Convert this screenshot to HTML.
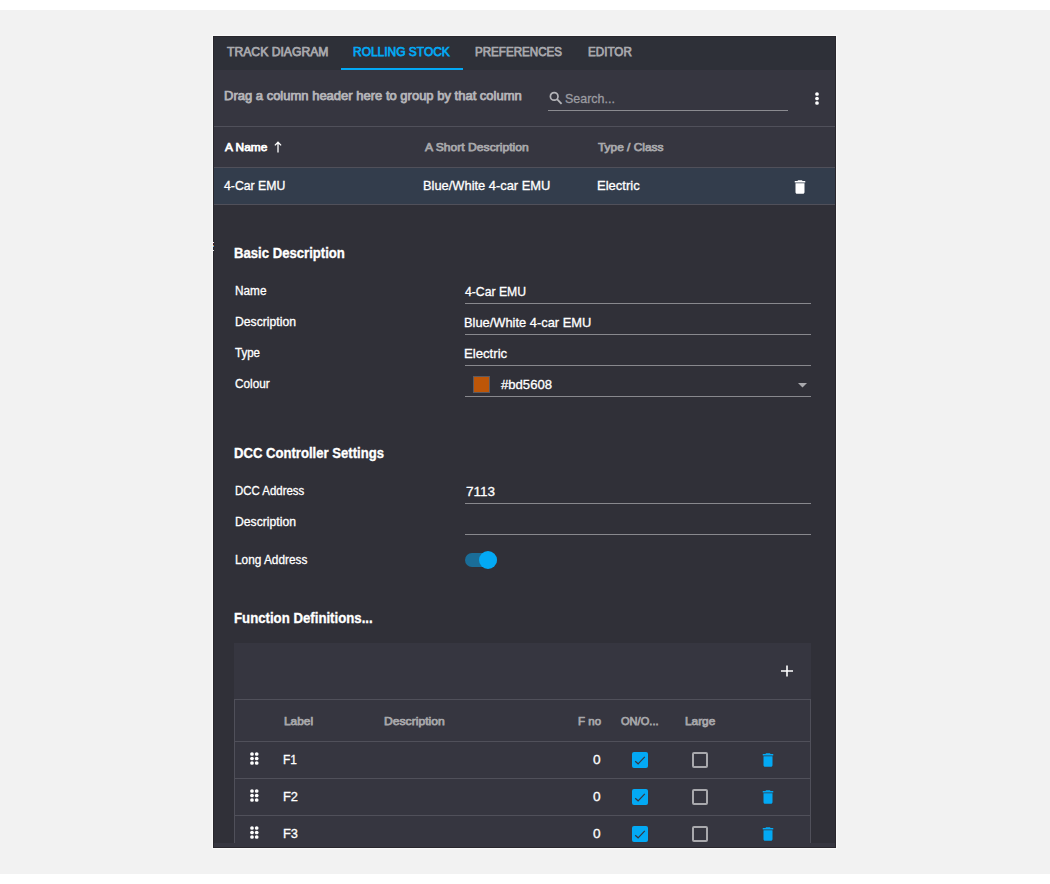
<!DOCTYPE html>
<html lang="en">
<head>
<meta charset="utf-8">
<title>Rolling Stock</title>
<style>
*{box-sizing:border-box;margin:0;padding:0}
html,body{width:1050px;height:884px;overflow:hidden}
body{position:relative;background:#f2f2f2;font-family:"Liberation Sans",sans-serif;color:#fff}
.a{position:absolute}
.strip{left:0;width:1050px;height:10px;background:#fff}
#panel{left:213px;top:36px;width:623px;height:812px;background:#303038;overflow:hidden;box-shadow:0 0 0 1px #f9f9f9,0 0 0 2px rgba(255,255,255,.12)}
/* all coordinates inside #page are page coordinates */
#page{position:absolute;left:0;top:0;width:1050px;height:884px;overflow:hidden}
.t{position:absolute;height:20px;line-height:20px;white-space:nowrap;transform-origin:0 0}
.ln{position:absolute;height:1px;background:#50505a}
.ul{position:absolute;height:1px;background:#88888d;left:465px;width:346px}
svg{position:absolute;overflow:visible}
</style>
</head>
<body>
<div class="a strip" style="top:0"></div>
<div class="a strip" style="top:874px"></div>
<div class="a" id="panel"></div>
<div id="page">
  <!-- tab bar -->
  <div class="a" style="left:213px;top:36px;width:623px;height:34px;background:#2e3038"></div>
  <div class="a" style="left:341px;top:68px;width:122px;height:2px;background:#03a9f4"></div>
  <!-- master grid -->
  <div class="a" style="left:213px;top:70px;width:623px;height:135px;background:#363640"></div>
  <div class="ln" style="left:213px;top:126px;width:623px"></div>
  <div class="ln" style="left:213px;top:167px;width:623px"></div>
  <div class="a" style="left:213px;top:168px;width:623px;height:36px;background:#333d4c"></div>
  <div class="ln" style="left:213px;top:204px;width:623px"></div>
  <!-- search -->
  <div class="a" style="left:548px;top:110px;width:240px;height:1px;background:#8b8b90"></div>
  <svg style="left:548px;top:90px" width="16" height="16" viewBox="0 0 16 16"><circle cx="6.2" cy="6.4" r="3.8" fill="none" stroke="#b4b4b8" stroke-width="1.7"/><path d="M9 9.2 L13.6 13.8" stroke="#b4b4b8" stroke-width="1.9" fill="none"/></svg>
  <!-- kebab -->
  <svg style="left:813px;top:90px" width="8" height="16" viewBox="0 0 8 16"><circle cx="4" cy="4" r="1.85" fill="#fff"/><circle cx="4" cy="8.5" r="1.85" fill="#fff"/><circle cx="4" cy="13" r="1.85" fill="#fff"/></svg>
  <!-- sort arrow -->
  <svg style="left:272.8px;top:140.6px" width="10" height="12" viewBox="0 0 10 12"><path d="M5 1.2 V11.4 M1.9 4.4 L5 1.2 L8.1 4.4" stroke="#fff" stroke-width="1.3" fill="none"/></svg>
  <!-- trash white -->
  <svg style="left:790.7px;top:177.8px" width="18" height="18" viewBox="0 0 24 24"><path fill="#fff" d="M6 19c0 1.1.9 2 2 2h8c1.1 0 2-.9 2-2V7H6v12zM19 4h-3.5l-1-1h-5l-1 1H5v2h14V4z"/></svg>

  <!-- form underlines -->
  <div class="ul" style="top:303px"></div>
  <div class="ul" style="top:334px"></div>
  <div class="ul" style="top:365px"></div>
  <div class="ul" style="top:396px"></div>
  <div class="ul" style="top:503px"></div>
  <div class="ul" style="top:534px"></div>
  <!-- colour swatch -->
  <div class="a" style="left:473px;top:376px;width:17px;height:17px;background:#bd5608;border:1px solid #5a5a62"></div>
  <svg style="left:797.5px;top:383px" width="9" height="5" viewBox="0 0 9 5"><path d="M0 0 H9 L4.5 4.4 Z" fill="#a9a9ad"/></svg>
  <!-- switch -->
  <div class="a" style="left:465px;top:553px;width:32px;height:14px;border-radius:7px;background:#1a6d98"></div>
  <div class="a" style="left:479px;top:551px;width:18px;height:18px;border-radius:9px;background:#03a9f4"></div>

  <!-- inner grid -->
  <div class="a" style="left:234px;top:643px;width:577px;height:200px;background:#363640"></div>
  <div class="ln" style="left:234px;top:699px;width:577px"></div>
  <div class="ln" style="left:234px;top:741px;width:577px"></div>
  <div class="ln" style="left:234px;top:778px;width:577px"></div>
  <div class="ln" style="left:234px;top:815px;width:577px"></div>
  <div class="a" style="left:234px;top:699px;width:1px;height:144px;background:#50505a"></div>
  <div class="a" style="left:810px;top:699px;width:1px;height:144px;background:#50505a"></div>
  <!-- plus -->
  <svg style="left:781.1px;top:665.2px" width="12" height="12" viewBox="0 0 12 12"><path d="M0 6 H12 M6 .4 V11.6" stroke="#fff" stroke-width="1.6" fill="none"/></svg>
  <svg style="left:249.8px;top:752px" width="9" height="13" viewBox="0 0 9 13"><circle cx="2" cy="2" r="1.85" fill="#fff"/><circle cx="2" cy="6.5" r="1.85" fill="#fff"/><circle cx="2" cy="11" r="1.85" fill="#fff"/><circle cx="6.7" cy="2" r="1.85" fill="#fff"/><circle cx="6.7" cy="6.5" r="1.85" fill="#fff"/><circle cx="6.7" cy="11" r="1.85" fill="#fff"/></svg>
  <div class="a" style="left:632px;top:752px;width:16px;height:16px;border-radius:2px;background:#03a9f4"></div>
  <svg style="left:632px;top:752px" width="16" height="16" viewBox="0 0 16 16"><path d="M3.2 9.2 L6.1 11.8 L12.8 4.9" stroke="#363640" stroke-width="1.2" fill="none"/></svg>
  <div class="a" style="left:692px;top:752px;width:16px;height:16px;border-radius:2px;border:2px solid #a9a9ad"></div>
  <svg style="left:758.9px;top:751.4px" width="18" height="18" viewBox="0 0 24 24"><path fill="#03a9f4" d="M6 19c0 1.1.9 2 2 2h8c1.1 0 2-.9 2-2V7H6v12zM19 4h-3.5l-1-1h-5l-1 1H5v2h14V4z"/></svg>
  <svg style="left:249.8px;top:789px" width="9" height="13" viewBox="0 0 9 13"><circle cx="2" cy="2" r="1.85" fill="#fff"/><circle cx="2" cy="6.5" r="1.85" fill="#fff"/><circle cx="2" cy="11" r="1.85" fill="#fff"/><circle cx="6.7" cy="2" r="1.85" fill="#fff"/><circle cx="6.7" cy="6.5" r="1.85" fill="#fff"/><circle cx="6.7" cy="11" r="1.85" fill="#fff"/></svg>
  <div class="a" style="left:632px;top:789px;width:16px;height:16px;border-radius:2px;background:#03a9f4"></div>
  <svg style="left:632px;top:789px" width="16" height="16" viewBox="0 0 16 16"><path d="M3.2 9.2 L6.1 11.8 L12.8 4.9" stroke="#363640" stroke-width="1.2" fill="none"/></svg>
  <div class="a" style="left:692px;top:789px;width:16px;height:16px;border-radius:2px;border:2px solid #a9a9ad"></div>
  <svg style="left:758.9px;top:788.4px" width="18" height="18" viewBox="0 0 24 24"><path fill="#03a9f4" d="M6 19c0 1.1.9 2 2 2h8c1.1 0 2-.9 2-2V7H6v12zM19 4h-3.5l-1-1h-5l-1 1H5v2h14V4z"/></svg>
  <svg style="left:249.8px;top:826px" width="9" height="13" viewBox="0 0 9 13"><circle cx="2" cy="2" r="1.85" fill="#fff"/><circle cx="2" cy="6.5" r="1.85" fill="#fff"/><circle cx="2" cy="11" r="1.85" fill="#fff"/><circle cx="6.7" cy="2" r="1.85" fill="#fff"/><circle cx="6.7" cy="6.5" r="1.85" fill="#fff"/><circle cx="6.7" cy="11" r="1.85" fill="#fff"/></svg>
  <div class="a" style="left:632px;top:826px;width:16px;height:16px;border-radius:2px;background:#03a9f4"></div>
  <svg style="left:632px;top:826px" width="16" height="16" viewBox="0 0 16 16"><path d="M3.2 9.2 L6.1 11.8 L12.8 4.9" stroke="#363640" stroke-width="1.2" fill="none"/></svg>
  <div class="a" style="left:692px;top:826px;width:16px;height:16px;border-radius:2px;border:2px solid #a9a9ad"></div>
  <svg style="left:758.9px;top:825.4px" width="18" height="18" viewBox="0 0 24 24"><path fill="#03a9f4" d="M6 19c0 1.1.9 2 2 2h8c1.1 0 2-.9 2-2V7H6v12zM19 4h-3.5l-1-1h-5l-1 1H5v2h14V4z"/></svg>
<div class="t" style="left:227.49px;top:42.00px;font-size:12.5px;font-weight:400;color:#a9a9ae;-webkit-text-stroke:0.75px #a9a9ae;transform:scaleX(0.9745)">TRACK DIAGRAM</div>
<div class="t" style="left:353.23px;top:42.00px;font-size:12.5px;font-weight:400;color:#03a9f4;-webkit-text-stroke:0.75px #03a9f4;transform:scaleX(0.9572)">ROLLING STOCK</div>
<div class="t" style="left:475.25px;top:42.00px;font-size:12.5px;font-weight:400;color:#a9a9ae;-webkit-text-stroke:0.75px #a9a9ae;transform:scaleX(0.9276)">PREFERENCES</div>
<div class="t" style="left:588.25px;top:42.00px;font-size:12.5px;font-weight:400;color:#a9a9ae;-webkit-text-stroke:0.75px #a9a9ae;transform:scaleX(0.9319)">EDITOR</div>
<div class="t" style="left:224.15px;top:86.00px;font-size:12.2px;font-weight:400;color:#b5b5b9;-webkit-text-stroke:0.75px #b5b5b9;transform:scaleX(1.0668)">Drag a column header here to group by that column</div>
<div class="t" style="left:564.81px;top:88.50px;font-size:13px;font-weight:400;color:#9b9ba0;-webkit-text-stroke:0.3px #9b9ba0;transform:scaleX(0.9583)">Search...</div>
<div class="t" style="left:224.61px;top:137.00px;font-size:11.6px;font-weight:400;color:#ffffff;-webkit-text-stroke:0.75px #ffffff;transform:scaleX(1.0254)">A Name</div>
<div class="t" style="left:424.61px;top:137.00px;font-size:11.6px;font-weight:400;color:#a8a8ab;-webkit-text-stroke:0.75px #a8a8ab;transform:scaleX(1.0447)">A Short Description</div>
<div class="t" style="left:597.61px;top:137.00px;font-size:11.6px;font-weight:400;color:#a8a8ab;-webkit-text-stroke:0.75px #a8a8ab;transform:scaleX(1.0265)">Type / Class</div>
<div class="t" style="left:224.41px;top:175.50px;font-size:13px;font-weight:400;color:#ffffff;-webkit-text-stroke:0.3px #ffffff;transform:scaleX(0.9421)">4-Car EMU</div>
<div class="t" style="left:423.43px;top:175.50px;font-size:13px;font-weight:400;color:#ffffff;-webkit-text-stroke:0.3px #ffffff;transform:scaleX(0.9902)">Blue/White 4-car EMU</div>
<div class="t" style="left:596.72px;top:175.50px;font-size:13px;font-weight:400;color:#ffffff;-webkit-text-stroke:0.3px #ffffff;transform:scaleX(1.0033)">Electric</div>
<div class="t" style="left:233.65px;top:242.50px;font-size:15px;font-weight:700;color:#ffffff;-webkit-text-stroke:0.35px #ffffff;transform:scaleX(0.8750)">Basic Description</div>
<div class="t" style="left:234.52px;top:281.00px;font-size:12px;font-weight:400;color:#ffffff;-webkit-text-stroke:0.3px #ffffff;transform:scaleX(0.9823)">Name</div>
<div class="t" style="left:234.52px;top:312.00px;font-size:12px;font-weight:400;color:#ffffff;-webkit-text-stroke:0.3px #ffffff;transform:scaleX(1.0153)">Description</div>
<div class="t" style="left:234.52px;top:343.00px;font-size:12px;font-weight:400;color:#ffffff;-webkit-text-stroke:0.3px #ffffff;transform:scaleX(0.9593)">Type</div>
<div class="t" style="left:234.52px;top:374.00px;font-size:12px;font-weight:400;color:#ffffff;-webkit-text-stroke:0.3px #ffffff;transform:scaleX(0.9805)">Colour</div>
<div class="t" style="left:465.31px;top:281.50px;font-size:13px;font-weight:400;color:#ffffff;-webkit-text-stroke:0.3px #ffffff;transform:scaleX(0.9405)">4-Car EMU</div>
<div class="t" style="left:464.43px;top:312.50px;font-size:13px;font-weight:400;color:#ffffff;-webkit-text-stroke:0.3px #ffffff;transform:scaleX(0.9895)">Blue/White 4-car EMU</div>
<div class="t" style="left:464.41px;top:343.50px;font-size:13px;font-weight:400;color:#ffffff;-webkit-text-stroke:0.3px #ffffff;transform:scaleX(1.0128)">Electric</div>
<div class="t" style="left:500.72px;top:374.50px;font-size:13px;font-weight:400;color:#ffffff;-webkit-text-stroke:0.3px #ffffff;transform:scaleX(1.0075)">#bd5608</div>
<div class="t" style="left:233.65px;top:442.50px;font-size:15px;font-weight:700;color:#ffffff;-webkit-text-stroke:0.35px #ffffff;transform:scaleX(0.8733)">DCC Controller Settings</div>
<div class="t" style="left:234.51px;top:481.00px;font-size:12px;font-weight:400;color:#ffffff;-webkit-text-stroke:0.3px #ffffff;transform:scaleX(0.9525)">DCC Address</div>
<div class="t" style="left:234.52px;top:512.00px;font-size:12px;font-weight:400;color:#ffffff;-webkit-text-stroke:0.3px #ffffff;transform:scaleX(1.0153)">Description</div>
<div class="t" style="left:234.52px;top:550.00px;font-size:12px;font-weight:400;color:#ffffff;-webkit-text-stroke:0.3px #ffffff;transform:scaleX(0.9853)">Long Address</div>
<div class="t" style="left:465.62px;top:481.50px;font-size:13px;font-weight:400;color:#ffffff;-webkit-text-stroke:0.3px #ffffff;transform:scaleX(1.0406)">7113</div>
<div class="t" style="left:233.64px;top:607.50px;font-size:15px;font-weight:700;color:#ffffff;-webkit-text-stroke:0.35px #ffffff;transform:scaleX(0.8806)">Function Definitions...</div>
<div class="t" style="left:283.71px;top:711.00px;font-size:11.6px;font-weight:400;color:#a8a8ab;-webkit-text-stroke:0.75px #a8a8ab;transform:scaleX(1.0250)">Label</div>
<div class="t" style="left:383.71px;top:711.00px;font-size:11.6px;font-weight:400;color:#a8a8ab;-webkit-text-stroke:0.75px #a8a8ab;transform:scaleX(1.0474)">Description</div>
<div class="t" style="left:577.70px;top:711.00px;font-size:11.6px;font-weight:400;color:#a8a8ab;-webkit-text-stroke:0.75px #a8a8ab;transform:scaleX(0.9935)">F no</div>
<div class="t" style="left:620.79px;top:711.00px;font-size:11.6px;font-weight:400;color:#a8a8ab;-webkit-text-stroke:0.75px #a8a8ab;transform:scaleX(0.9553)">ON/O...</div>
<div class="t" style="left:685.41px;top:711.00px;font-size:11.6px;font-weight:400;color:#a8a8ab;-webkit-text-stroke:0.75px #a8a8ab;transform:scaleX(1.0200)">Large</div>
<div class="t" style="left:282.79px;top:749.50px;font-size:13px;font-weight:400;color:#ffffff;-webkit-text-stroke:0.3px #ffffff;transform:scaleX(0.9167)">F1</div>
<div class="t" style="left:282.73px;top:786.50px;font-size:13px;font-weight:400;color:#ffffff;-webkit-text-stroke:0.3px #ffffff;transform:scaleX(0.9872)">F2</div>
<div class="t" style="left:282.73px;top:823.50px;font-size:13px;font-weight:400;color:#ffffff;-webkit-text-stroke:0.3px #ffffff;transform:scaleX(0.9872)">F3</div>
<div class="t" style="left:593.33px;top:749.50px;font-size:13px;font-weight:400;color:#ffffff;-webkit-text-stroke:0.3px #ffffff;transform:scaleX(1.0497)">0</div>
<div class="t" style="left:593.33px;top:786.50px;font-size:13px;font-weight:400;color:#ffffff;-webkit-text-stroke:0.3px #ffffff;transform:scaleX(1.0497)">0</div>
<div class="t" style="left:593.33px;top:823.50px;font-size:13px;font-weight:400;color:#ffffff;-webkit-text-stroke:0.3px #ffffff;transform:scaleX(1.0497)">0</div>
  <div class="a" style="left:213px;top:843px;width:623px;height:5px;background:#363640"></div>
  <div class="a" style="left:213px;top:36px;width:623px;height:812px;border:1px solid #29272d"></div>
  <div class="a" style="left:213px;top:242px;width:1px;height:1px;background:#e8e8e8"></div><div class="a" style="left:213px;top:243px;width:1px;height:1px;background:#5e1a2c"></div><div class="a" style="left:213px;top:245px;width:1px;height:1px;background:#d0934a"></div><div class="a" style="left:213px;top:246px;width:1px;height:1px;background:#5aa0dc"></div><div class="a" style="left:213px;top:250px;width:1px;height:1px;background:#e8e8e8"></div>
</div>
</body>
</html>
